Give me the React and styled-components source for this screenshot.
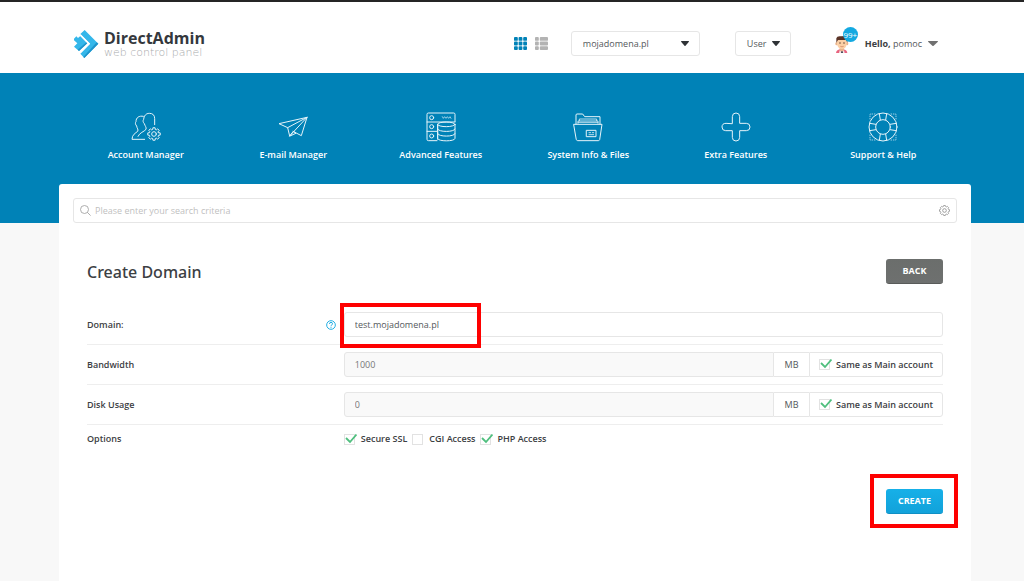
import React, { useState } from 'react';
import styled, { createGlobalStyle } from 'styled-components';

const colors = {
  primary: '#0082b7',
  accent: '#14a9e1',
  text: '#54585b',
  dark: '#3c4043',
  border: '#e6e6e6',
  line: '#eeeeee',
  green: '#4fbf7e',
};

const App = () => {
  const [domain, setDomain] = useState('test.mojadomena.pl');

  return (
    <>
      <GlobalStyle />
      <Page>
        <Header>
          <Logo href="#home">
            <LogoMark />
            <LogoText>
              <LogoName>DirectAdmin</LogoName>
              <LogoTagline>web control panel</LogoTagline>
            </LogoText>
          </Logo>
          <HeaderTools>
            <ViewSwitch>
              <IconButton aria-label="Grid view"><GridIcon /></IconButton>
              <IconButton aria-label="List view"><RowsIcon /></IconButton>
            </ViewSwitch>
            <HeaderSelect label="Domain" width="129px" options={['mojadomena.pl']} />
            <HeaderSelect label="Access level" width="56px" options={['User']} />
            <Account>
              <AvatarBox>
                <Avatar />
                <Badge>99+</Badge>
              </AvatarBox>
              <span><b>Hello,</b> pomoc</span>
              <Caret color="#707070" wide />
            </Account>
          </HeaderTools>
        </Header>

        <Hero>
          <Nav>
            {menu.map(({ label, Icon }) => (
              <NavItem key={label} href="#menu">
                <Icon />
                {label}
              </NavItem>
            ))}
          </Nav>
        </Hero>

        <Main>
          <Search>
            <SearchIcon />
            <SearchInput aria-label="Search" placeholder="Please enter your search criteria" />
            <IconButton aria-label="Search settings"><SettingsIcon /></IconButton>
          </Search>

          <Form onSubmit={(e) => e.preventDefault()}>
            <TitleRow>
              <Title>Create Domain</Title>
              <Button type="button">Back</Button>
            </TitleRow>

            <Row>
              <Label htmlFor="domain">Domain:<HelpIcon /></Label>
              <Marked>
                <TextInput id="domain" value={domain} onChange={(e) => setDomain(e.target.value)} />
                <FieldMark />
              </Marked>
            </Row>
            <LimitRow id="bandwidth" label="Bandwidth" value="1000" />
            <LimitRow id="disk" label="Disk Usage" value="0" />
            <Row $last>
              <Label as="span">Options</Label>
              <Options>
                <Check label="Secure SSL" defaultChecked />
                <Check label="CGI Access" />
                <Check label="PHP Access" defaultChecked />
              </Options>
            </Row>

            <Actions>
              <Marked>
                <Button $primary type="submit">Create</Button>
                <ButtonMark />
              </Marked>
            </Actions>
          </Form>
        </Main>
      </Page>
    </>
  );
};

const HeaderSelect = ({ label, width, options }) => (
  <SelectBox $width={width}>
    <Select aria-label={label}>
      {options.map((option) => <option key={option}>{option}</option>)}
    </Select>
    <Caret color="#2f3336" />
  </SelectBox>
);

const LimitRow = ({ id, label, value }) => (
  <Row>
    <Label htmlFor={id}>{label}</Label>
    <Group>
      <TextInput id={id} defaultValue={value} disabled />
      <Unit>MB</Unit>
      <GroupCheck>
        <Check label="Same as Main account" defaultChecked />
      </GroupCheck>
    </Group>
  </Row>
);

const Check = ({ label, defaultChecked }) => (
  <CheckLabel>
    <CheckBox>
      <CheckInput type="checkbox" defaultChecked={defaultChecked} />
      <Tick width="13" height="11" viewBox="0 0 13 11">
        <path d="M2 4l4 4L12.500 0.500" fill="none" stroke={colors.green} strokeWidth="1.8" />
      </Tick>
    </CheckBox>
    {label}
  </CheckLabel>
);

const LogoMark = () => (
  <svg width="26" height="30" viewBox="0 0 78 90">
    <path d="M35 3 76 44 34 87 22 74 51 44 22 15z" fill="#34b7ea" />
    <path d="M76 44 34 87 31 84 71 40z" fill="#1e94cb" />
    <path d="M3 29 10 22 15 27 22 21 43 43 18 66 3 53 13 43 3 34z" fill="#34b7ea" />
    <path d="M43 43 18 66 14 62 40 40z" fill="#1e94cb" />
    <path d="M22 18 48 44 21 71" fill="none" stroke="#fff" strokeWidth="5" />
  </svg>
);

const GridIcon = () => (
  <svg width="13" height="13" viewBox="0 0 13 13" fill={colors.primary}>
    {[0, 4.6, 9.2].map((y) => [0, 4.6, 9.2].map((x) => (
      <rect key={`${x}-${y}`} x={x} y={y} width="3.8" height="3.8" rx="0.9" />
    )))}
  </svg>
);

const RowsIcon = () => (
  <svg width="13" height="13" viewBox="0 0 13 13" fill="#b3b3b3">
    {[0, 4.6, 9.2].map((y) => (
      <g key={y}>
        <rect y={y} width="3.8" height="3.8" rx="0.9" />
        <rect x="4.8" y={y} width="8.2" height="3.8" rx="0.9" />
      </g>
    ))}
  </svg>
);

const Caret = ({ color, wide }) => (
  <svg width={wide ? 10 : 8} height="5" viewBox="0 0 8 5" preserveAspectRatio="none">
    <path d="M0.3 0h7.4q0.5 0.3 0 0.9L4.5 4.7q-0.5 0.4-1 0L0.3 0.9q-0.5-0.6 0-0.9z" fill={color} />
  </svg>
);

const Avatar = () => (
  <svg width="14" height="18" viewBox="0 0 42 54">
    <path d="M3 54q1-9 12-11h10q11 2 12 11z" fill="#e8637f" />
    <path d="M14 36h13v10l-6 6-7-6z" fill="#e9b48c" />
    <path d="M14 46l6 5 7-5 2 8H12z" fill="#f6e3e3" />
    <path d="M19 49h4l1 5h-6z" fill="#3c4554" />
    <ellipse cx="5" cy="26" rx="4" ry="5" fill="#e9b48c" />
    <ellipse cx="36" cy="26" rx="4" ry="5" fill="#e9b48c" />
    <path d="M6 12h29v16q-2 14-14 14T6 28z" fill="#fbcfa5" />
    <path d="M4 23V10Q6 2 18 4l16-1q5 6 3 20l-4-8H9z" fill="#5b3427" />
    <circle cx="15" cy="24" r="2" fill="#4a2d24" />
    <circle cx="27" cy="24" r="2" fill="#4a2d24" />
    <path d="M16 34q5 3 10 0" stroke="#c9795a" strokeWidth="2" fill="none" />
  </svg>
);

const SearchIcon = () => (
  <svg width="11" height="11" viewBox="0 0 11 11" fill="none" stroke="#999">
    <circle cx="4.5" cy="4.5" r="4" strokeWidth="0.8" />
    <path d="M7.4 7.4l3.2 3.2" strokeWidth="0.8" />
  </svg>
);

const gearPath = (cx, cy, outer, inner) => {
  const points = [];
  for (let i = 0; i < 8; i += 1) {
    [[-16, inner], [-10, outer], [10, outer], [16, inner]].forEach(([offset, r]) => {
      const angle = ((i * 45 + offset) * Math.PI) / 180;
      points.push(`${(cx + r * Math.cos(angle)).toFixed(1)} ${(cy + r * Math.sin(angle)).toFixed(1)}`);
    });
  }
  return `M${points.join('L')}Z`;
};

const SettingsIcon = () => (
  <svg width="11" height="11" viewBox="0 0 33 33" fill="none" stroke="#8a8a8a" strokeWidth="2.4">
    <path d={gearPath(16.5, 16.5, 15, 12.5)} strokeLinejoin="round" />
    <circle cx="16.5" cy="16.5" r="5.5" />
  </svg>
);

const HelpIcon = () => (
  <svg width="10" height="10" viewBox="0 0 30 30" fill="none" stroke={colors.accent} strokeWidth="2.8">
    <circle cx="15" cy="15" r="13" />
    <path d="M10.5 12q0-5 4.500-5t4.500 4.500q0 2.500-2.500 3.500t-2 4M15 21.500v3" />
  </svg>
);

const MenuIcon = ({ children }) => (
  <svg
    width="30"
    height="30"
    viewBox="0 0 90 90"
    fill="none"
    stroke="#e6f4fa"
    strokeWidth="3"
    strokeLinecap="round"
    strokeLinejoin="round"
  >
    {children}
  </svg>
);

const AccountIcon = () => (
  <MenuIcon>
    <path d="M37 13C24 10 15 17 15 29c-3 3-2 9 2 13 1 8 6 10 3 16C14 63 3 68 3 82h38" />
    <path d="M71 38V20C71 9 65 4 55 4S39 11 38 22c-3 4-2 9 2 13 2 7 7 11 5 17-5 7-20 10-24 21" />
    <path d={gearPath(69, 66, 19, 14)} />
    <circle cx="69" cy="66" r="7" />
  </MenuIcon>
);

const MailIcon = () => (
  <MenuIcon>
    <path d="M87 16L3 35l26 12 6 25L87 16 70 71 45 58M29 47L87 16M35 72l11-14 7 5z" />
  </MenuIcon>
);

const FeaturesIcon = () => (
  <MenuIcon>
    <path d="M33 86H7q-4 0-4-4V7q0-4 4-4h76q4 0 4 4v22M3 30h84M3 58h30M35 37v45" />
    <circle cx="17" cy="17" r="6" />
    <circle cx="17" cy="44" r="6" />
    <circle cx="17" cy="72" r="6" />
    <path d="M49 14l3 5 4-5 4 5 4-5 4 5 4-5 3 5" strokeWidth="2" />
    <ellipse cx="61" cy="37" rx="26" ry="7" />
    <path d="M35 37v42c0 10 52 10 52 0V37M35 51c0 10 52 10 52 0M35 65c0 10 52 10 52 0" />
  </MenuIcon>
);

const FilesIcon = () => (
  <MenuIcon>
    <path d="M9 36V9q0-3 3-3h17l6 8h46v22" />
    <path d="M15 34v-7h60v7M19 26v-5h52v5M15 31h60" strokeWidth="2.4" />
    <path d="M3 37h84l-7 46q-1 3-4 3H14q-3 0-4-3z" />
    <path d="M41 55h28v19H41z" />
    <path d="M48 62h5M58 62h4M48 68h14" strokeWidth="2.4" />
  </MenuIcon>
);

const ExtraIcon = () => (
  <MenuIcon>
    <path d="M34 34V14q0-11 11-11t11 11v20h20q11 0 11 11T76 56H56v20q0 11-11 11T34 76V56H14Q3 56 3 45t11-11z" />
  </MenuIcon>
);

const SupportIcon = () => (
  <MenuIcon>
    <circle cx="45" cy="45" r="42" />
    <circle cx="45" cy="45" r="22" />
    {[0, 90, 180, 270].map((angle) => (
      <g key={angle} transform={`rotate(${angle} 45 45)`}>
        <path d="M34 5l3 19M56 5l-3 19" />
        <path d="M6 21V6h15" strokeWidth="2" strokeDasharray="2 5" />
      </g>
    ))}
  </MenuIcon>
);

const menu = [
  { label: 'Account Manager', Icon: AccountIcon },
  { label: 'E-mail Manager', Icon: MailIcon },
  { label: 'Advanced Features', Icon: FeaturesIcon },
  { label: 'System Info & Files', Icon: FilesIcon },
  { label: 'Extra Features', Icon: ExtraIcon },
  { label: 'Support & Help', Icon: SupportIcon },
];

const GlobalStyle = createGlobalStyle`
  *, *::before, *::after {
    box-sizing: border-box;
  }

  body {
    margin: 0;
    background: #f8f8f8;
    color: ${colors.text};
    font: 9px/12px "Open Sans", "Noto Sans", sans-serif;
  }

  button, input, select {
    margin: 0;
    color: inherit;
    font: inherit;
  }

  svg {
    display: block;
    flex: none;
  }
`;

const Page = styled.div`
  display: flex;
  flex-direction: column;
  min-height: 100vh;
  border-top: 2px solid #252525;
`;

const Header = styled.header`
  display: flex;
  align-items: center;
  justify-content: space-between;
  height: 71px;
  padding: 12px 86px 0 73px;
  background: #fff;
`;

const Logo = styled.a`
  display: flex;
  align-items: center;
  gap: 5px;
  text-decoration: none;
`;

const LogoText = styled.span`
  display: flex;
  flex-direction: column;
`;

const LogoName = styled.span`
  color: #34383d;
  font: 700 16px/18px "Open Sans", sans-serif;
`;

const LogoTagline = styled.span`
  color: #a9abad;
  font: 200 11px/12px "DejaVu Sans", sans-serif;
`;

const HeaderTools = styled.div`
  display: flex;
  align-items: center;
`;

const ViewSwitch = styled.div`
  display: flex;
  gap: 8px;
  margin-right: 23px;
`;

const IconButton = styled.button`
  padding: 0;
  border: 0;
  background: none;
  cursor: pointer;
`;

const SelectBox = styled.div`
  display: grid;
  align-items: center;
  width: ${({ $width }) => $width};
  margin-right: 35px;

  > * {
    grid-area: 1 / 1;
  }

  > svg {
    justify-self: end;
    margin-right: 11px;
    pointer-events: none;
  }
`;

const Select = styled.select`
  width: 100%;
  height: 25px;
  padding: 0 11px;
  border: 1px solid ${colors.border};
  border-radius: 3px;
  background: #fff;
  appearance: none;
`;

const Account = styled.div`
  display: flex;
  align-items: center;
  gap: 6px;
  padding-left: 9px;

  b {
    color: ${colors.dark};
  }
`;

const AvatarBox = styled.div`
  position: relative;
  width: 24px;
`;

const Badge = styled.span`
  position: absolute;
  top: -8px;
  left: 8px;
  width: 15px;
  height: 15px;
  border-radius: 50%;
  background: ${colors.accent};
  color: #fff;
  font-size: 8px;
  line-height: 15px;
  text-align: center;
`;

const Hero = styled.div`
  height: 150px;
  padding: 39px 67px 0 72px;
  background: ${colors.primary};
`;

const Nav = styled.nav`
  display: grid;
  grid-template-columns: repeat(6, 1fr);
`;

const NavItem = styled.a`
  display: flex;
  flex-direction: column;
  align-items: center;
  gap: 7px;
  color: #fff;
  font-weight: 600;
  text-decoration: none;
`;

const Main = styled.main`
  flex: 1;
  margin: -39px 53px 0 59px;
  padding: 14px;
  border-radius: 3px 3px 0 0;
  background: #fff;
`;

const Search = styled.div`
  display: flex;
  align-items: center;
  gap: 4px;
  height: 25px;
  padding: 0 6px;
  border: 1px solid ${colors.border};
  border-radius: 3px;
`;

const SearchInput = styled.input`
  flex: 1;
  padding: 0;
  border: 0;
  outline: 0;
  background: none;

  &::placeholder {
    color: #bfbfbf;
    opacity: 1;
  }
`;

const Form = styled.form`
  padding: 36px 14px 0;
`;

const TitleRow = styled.div`
  display: flex;
  align-items: center;
  justify-content: space-between;
  margin-bottom: 21px;
`;

const Title = styled.h1`
  margin: 0;
  color: ${colors.dark};
  font: 500 16px/24px "Noto Sans", "Open Sans", sans-serif;
`;

const Button = styled.button`
  display: block;
  width: 57px;
  height: 25px;
  padding: 0;
  border: 0;
  border-bottom: 1px solid ${({ $primary }) => ($primary ? '#0f8fc4' : '#595b5a')};
  border-radius: 3px;
  background: ${({ $primary }) => ($primary
    ? 'linear-gradient(#16b0e8, #12a2da)'
    : 'linear-gradient(#6b6e6c, #6e706f)')};
  color: #fff;
  font-weight: 700;
  text-transform: uppercase;
  cursor: pointer;
`;

const Row = styled.div`
  display: grid;
  grid-template-columns: 3fr 7fr;
  align-items: center;
  padding: ${({ $last }) => ($last ? '8px 0 7px' : '7px 0')};
  border-bottom: ${({ $last }) => ($last ? '0' : `1px solid ${colors.line}`)};
`;

const Label = styled.label`
  display: flex;
  align-items: center;
  justify-content: space-between;
  padding-right: 8px;
  color: ${colors.dark};
  font-weight: 600;
`;

const Marked = styled.div`
  position: relative;
`;

const Mark = styled.span`
  position: absolute;
  border: 4px solid #fe0000;
  pointer-events: none;
`;

const FieldMark = styled(Mark)`
  top: -9px;
  left: -4px;
  width: 141px;
  height: 45px;
`;

const ButtonMark = styled(Mark)`
  inset: -15px -15px -14px -16px;
`;

const TextInput = styled.input`
  display: block;
  width: 100%;
  height: 25px;
  padding: 0 10px;
  border: 1px solid ${colors.border};
  border-radius: 3px;
  background: #fff;

  &:disabled {
    background: #f9f9f9;
    color: #777;
  }
`;

const Group = styled.div`
  display: flex;

  ${TextInput} {
    flex: 1;
    min-width: 0;
    border-radius: 3px 0 0 3px;
  }
`;

const Unit = styled.span`
  width: 35px;
  border: solid ${colors.border};
  border-width: 1px 0;
  line-height: 23px;
  text-align: center;
`;

const GroupCheck = styled.div`
  display: flex;
  align-items: center;
  padding: 0 9px;
  border: 1px solid ${colors.border};
  border-radius: 0 3px 3px 0;
`;

const Options = styled.div`
  display: flex;
  gap: 5px;
`;

const CheckLabel = styled.label`
  display: flex;
  align-items: center;
  gap: 4px;
  color: ${colors.dark};
  font-weight: 600;
`;

const CheckBox = styled.span`
  display: grid;
  align-items: center;
  width: 13px;

  > * {
    grid-area: 1 / 1;
  }
`;

const CheckInput = styled.input`
  width: 11px;
  height: 11px;
  border: 1px solid #e2e2e2;
  background: #fff;
  appearance: none;

  &:checked + svg {
    visibility: visible;
  }
`;

const Tick = styled.svg`
  visibility: hidden;
  pointer-events: none;
`;

const Actions = styled.div`
  display: flex;
  justify-content: flex-end;
  margin-top: 37px;
`;

export default App;
